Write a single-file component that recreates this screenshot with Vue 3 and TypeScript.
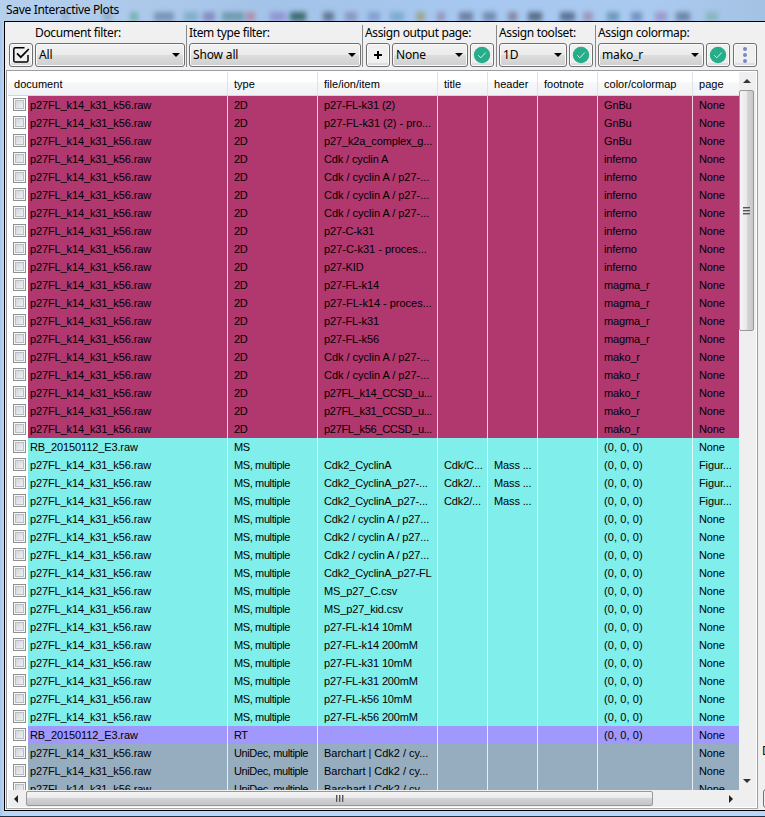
<script setup lang="ts">
interface Row {
  doc: string
  type: string
  item: string
  title: string
  header: string
  color: string
  page: string
  tone: string
}

const P27 = 'p27FL_k14_k31_k56.raw'
const RB = 'RB_20150112_E3.raw'

const make = (
  tone: string,
  type: string,
  item: string,
  color: string,
  doc = P27,
  title = '',
  header = '',
  page = 'None',
): Row => ({ doc, type, item, title, header, color, page, tone })

const plots2d: [string, string][] = [
  ['p27-FL-k31 (2)', 'GnBu'],
  ['p27-FL-k31 (2) - pro...', 'GnBu'],
  ['p27_k2a_complex_g...', 'GnBu'],
  ['Cdk / cyclin A', 'inferno'],
  ['Cdk / cyclin A / p27-...', 'inferno'],
  ['Cdk / cyclin A / p27-...', 'inferno'],
  ['Cdk / cyclin A / p27-...', 'inferno'],
  ['p27-C-k31', 'inferno'],
  ['p27-C-k31 - proces...', 'inferno'],
  ['p27-KID', 'inferno'],
  ['p27-FL-k14', 'magma_r'],
  ['p27-FL-k14 - proces...', 'magma_r'],
  ['p27-FL-k31', 'magma_r'],
  ['p27-FL-k56', 'magma_r'],
  ['Cdk / cyclin A / p27-...', 'mako_r'],
  ['Cdk / cyclin A / p27-...', 'mako_r'],
  ['p27FL_k14_CCSD_u...', 'mako_r'],
  ['p27FL_k31_CCSD_u...', 'mako_r'],
  ['p27FL_k56_CCSD_u...', 'mako_r'],
]

const spectra = [
  'Cdk2 / cyclin A / p27...',
  'Cdk2 / cyclin A / p27...',
  'Cdk2 / cyclin A / p27...',
  'Cdk2_CyclinA_p27-FL',
  'MS_p27_C.csv',
  'MS_p27_kid.csv',
  'p27-FL-k14 10mM',
  'p27-FL-k14 200mM',
  'p27-FL-k31 10mM',
  'p27-FL-k31 200mM',
  'p27-FL-k56 10mM',
  'p27-FL-k56 200mM',
]

const BLACK = '(0, 0, 0)'
const multi = 'MS, multiple'

const rows: Row[] = [
  ...plots2d.map(([item, color]) => make('magenta', '2D', item, color)),
  make('cyan', 'MS', '', BLACK, RB),
  make('cyan', multi, 'Cdk2_CyclinA', BLACK, P27, 'Cdk/C...', 'Mass ...', 'Figur...'),
  make('cyan', multi, 'Cdk2_CyclinA_p27-...', BLACK, P27, 'Cdk2/...', 'Mass ...', 'Figur...'),
  make('cyan', multi, 'Cdk2_CyclinA_p27-...', BLACK, P27, 'Cdk2/...', 'Mass ...', 'Figur...'),
  ...spectra.map((item) => make('cyan', multi, item, BLACK)),
  make('violet', 'RT', '', BLACK, RB),
  make('slate', 'UniDec, multiple', 'Barchart | Cdk2 / cy...', ''),
  make('slate', 'UniDec, multiple', 'Barchart | Cdk2 / cy...', ''),
  make('slate', 'UniDec, multiple', 'Barchart | Cdk2 / cy...', ''),
]

const track = (text: string): string => {
  if (text.includes('CCSD')) return 'tight'
  if (text === BLACK) return 'wide'
  if (text.includes(' - ') || /^Cdk \/.*\.\.\.$/.test(text) || text.startsWith('Barchart')) return 'loose'
  return ''
}

const columns = ['document', 'type', 'file/ion/item', 'title', 'header', 'footnote', 'color/colormap', 'page']

const blurs = [
  [62, 7, '#8da6c6'], [103, 9, '#88a4b8'], [130, 8, '#5fa99a'], [154, 20, '#6b83a8'], [184, 14, '#76a6bd'],
  [203, 12, '#7a78b4'], [222, 22, '#5f8f9e'], [246, 9, '#b37c92'], [270, 16, '#8c86ce'],
  [290, 16, '#1d4f4a'], [323, 11, '#4e5c78'], [345, 12, '#7f88b0'], [368, 12, '#7a92c8'], [390, 14, '#6fa4c4'],
  [416, 9, '#9a9a70'], [437, 8, '#8f86a4'], [459, 14, '#5c6888'], [483, 13, '#66749a'], [508, 9, '#7b7088'],
  [528, 14, '#3d5068'], [560, 15, '#405878'], [583, 10, '#9884a8'], [607, 12, '#5888a8'], [631, 11, '#6080b0'],
  [655, 12, '#9888c0'], [676, 14, '#587090'], [706, 12, '#80b0b0'],
] as [number, number, string][]
</script>

<template>
  <div class="window">
    <div class="titlebar">
      <svg class="behind" width="765" height="21" viewBox="0 0 765 21" aria-hidden="true">
        <rect v-for="b in blurs" :key="b[0]" :x="b[0]" y="12" :width="b[1]" height="9" :fill="b[2]" />
      </svg>
      <span class="caption">Save Interactive Plots</span>
    </div>

    <div class="client">
      <div class="main">
        <div class="toolbar">
          <div class="group g-doc">
            <label>Document filter:</label>
            <div class="controls">
              <button class="btn">
                <svg width="18" height="18" viewBox="0 0 18 18">
                  <path d="M12.5 1.8H3.4Q1.8 1.8 1.8 3.4v11q0 1.6 1.6 1.6h11q1.6 0 1.6-1.6V9" fill="none" stroke="#000" stroke-width="1.5" />
                  <path d="M5 7.4l3.8 3.8 8-8.2" fill="none" stroke="#000" stroke-width="1.7" />
                </svg>
              </button>
              <div class="select w150"><span>All</span><i /></div>
            </div>
          </div>
          <div class="group g-type">
            <label>Item type filter:</label>
            <div class="controls"><div class="select w172"><span>Show all</span><i /></div></div>
          </div>
          <div class="group g-page">
            <label>Assign output page:</label>
            <div class="controls">
              <button class="btn">
                <svg width="10" height="10" viewBox="0 0 10 10"><path d="M5 1v8M1 5h8" stroke="#000" stroke-width="2" /></svg>
              </button>
              <div class="select w76"><span>None</span><i /></div>
              <button class="btn">
                <svg width="18" height="18" viewBox="0 0 18 18"><circle cx="9" cy="9" r="8.2" fill="#27ad89" /><path d="M5.3 9.3l2.5 2.5 5-5.3" fill="none" stroke="#d9f3ea" stroke-width="1" /></svg>
              </button>
            </div>
          </div>
          <div class="group g-tool">
            <label>Assign toolset:</label>
            <div class="controls">
              <div class="select w68"><span>1D</span><i /></div>
              <button class="btn">
                <svg width="18" height="18" viewBox="0 0 18 18"><circle cx="9" cy="9" r="8.2" fill="#27ad89" /><path d="M5.3 9.3l2.5 2.5 5-5.3" fill="none" stroke="#d9f3ea" stroke-width="1" /></svg>
              </button>
            </div>
          </div>
          <div class="group g-map">
            <label>Assign colormap:</label>
            <div class="controls">
              <div class="select w106"><span>mako_r</span><i /></div>
              <button class="btn">
                <svg width="18" height="18" viewBox="0 0 18 18"><circle cx="9" cy="9" r="8.2" fill="#27ad89" /><path d="M5.3 9.3l2.5 2.5 5-5.3" fill="none" stroke="#d9f3ea" stroke-width="1" /></svg>
              </button>
              <button class="btn dots">
                <svg width="6" height="18" viewBox="0 0 6 18" fill="#7688c8"><circle cx="3" cy="3" r="2" /><circle cx="3" cy="9" r="2" /><circle cx="3" cy="15" r="2" /></svg>
              </button>
            </div>
          </div>
        </div>

        <div class="list">
          <div class="view">
            <div class="table">
              <div class="line head">
                <div v-for="c in columns" :key="c" class="cell">{{ c }}</div>
              </div>
              <div class="rows">
                <div v-for="(r, i) in rows" :key="i" class="line row" :class="r.tone">
                  <div class="cell doc"><span class="check" /><span class="name">{{ r.doc }}</span></div>
                  <div class="cell type">{{ r.type }}</div>
                  <div class="cell" :class="track(r.item)">{{ r.item }}</div>
                  <div class="cell">{{ r.title }}</div>
                  <div class="cell">{{ r.header }}</div>
                  <div class="cell"></div>
                  <div class="cell" :class="track(r.color)">{{ r.color }}</div>
                  <div class="cell">{{ r.page }}</div>
                </div>
              </div>
            </div>
            <div class="vscroll">
              <svg class="arrow" width="8" height="4" viewBox="0 0 8 4"><path d="M0 4L4 0l4 4z" fill="#333" /></svg>
              <div class="thumb"><b /><b /><b /></div>
              <svg class="arrow low" width="8" height="4" viewBox="0 0 8 4"><path d="M0 0l4 4 4-4z" fill="#333" /></svg>
            </div>
          </div>
          <div class="hscroll">
            <svg class="harrow" width="4" height="8" viewBox="0 0 4 8"><path d="M4 0v8L0 4z" fill="#222" /></svg>
            <div class="hthumb"><b /><b /><b /></div>
            <svg class="harrow right" width="4" height="8" viewBox="0 0 4 8"><path d="M0 0v8l4-4z" fill="#222" /></svg>
          </div>
        </div>
      </div>
      <div class="side">
        <span class="cut">D</span>
        <div class="field" />
      </div>
    </div>
    <div class="edge" />
  </div>
</template>

<style>
body {
  overflow: hidden;
}
</style>

<style scoped>
* {
  box-sizing: border-box;
}
.window {
  width: 765px;
  height: 817px;
  display: flex;
  flex-direction: column;
  background: linear-gradient(90deg, #a9c6e8, #b9d6f8 4px, #b9d6f8);
  overflow: hidden;
  font-family: "Noto Sans", "Open Sans", sans-serif;
  color: #000;
}
.titlebar {
  position: relative;
  height: 21px;
  flex: none;
  background: linear-gradient(90deg, #b6d0ec, #a4c3e8 35%, #a6c7ef 60%, #abcaf0 85%, #a4c2e3);
}
.behind {
  position: absolute;
  left: 0;
  top: 0;
  filter: blur(2.5px);
  opacity: 0.75;
}
.caption {
  position: relative;
  display: block;
  padding-left: 6px;
  font: 12px/19px "Noto Sans", sans-serif;
  letter-spacing: -0.33px;
}
.client {
  position: relative;
  margin-left: 4px;
  height: 790px;
  display: flex;
  border: 1px solid #000;
  border-right: 0;
  background: #f0f0f0;
}
.main {
  width: 752px;
  padding-left: 1px;
  flex: none;
}
.toolbar {
  height: 48px;
  display: flex;
  padding: 3px 0 0 3px;
}
.group {
  height: 42px;
  flex: none;
}
.group + .group {
  border-left: 1px solid #888;
  padding-left: 2px;
}
.g-doc {
  width: 177px;
}
.g-type {
  width: 176px;
}
.g-page {
  width: 134px;
}
.g-page .controls {
  margin-left: 1px;
}
.g-tool {
  width: 99px;
}
.group label {
  display: block;
  height: 18px;
  font-size: 12px;
  line-height: 16px;
  letter-spacing: -0.36px;
  white-space: nowrap;
}
.g-doc label {
  padding-left: 26px;
}
.controls {
  display: flex;
  gap: 2px;
}
.btn,
.select {
  height: 24px;
  border: 1px solid #707070;
  border-radius: 3px;
  background: linear-gradient(#f2f2f2, #ebebeb 50%, #dddddd 50%, #cfcfcf);
  box-shadow: inset 0 0 0 1px #fafafa;
}
.btn {
  width: 24px;
  flex: none;
  padding: 0;
  display: flex;
  align-items: center;
  justify-content: center;
  background: #f0f0f0;
  box-shadow: inset 0 0 0 1px #fcfcfc, inset 0 -2px 1px 1px #ddd;
}
.dots {
  margin-left: 1px;
}
.select {
  flex: none;
  display: flex;
  align-items: center;
  justify-content: space-between;
  padding: 0 4px 1px 3px;
  font-size: 12px;
  letter-spacing: -0.15px;
}
.select i {
  border: 4px solid transparent;
  border-top-color: #000;
  border-bottom: 0;
}
.w150 { width: 150px; }
.w172 { width: 172px; }
.w76 { width: 76px; }
.w68 { width: 68px; }
.w106 { width: 106px; }
.list {
  width: 752px;
  height: 739px;
  border: 1px solid #9c9ca4;
  border-bottom-color: #aaa;
  background: #fff;
  padding: 1px;
}
.view {
  height: 718px;
  display: flex;
}
.table {
  width: 731px;
  flex: none;
  display: flex;
  flex-direction: column;
  overflow: hidden;
  font-family: "Liberation Sans", Arial, sans-serif;
  font-size: 11px;
}
.line {
  display: grid;
  grid-template-columns: 220px 90px 120px 50px 50px 60px 95px 46px;
  flex: none;
}
.head {
  height: 24px;
  background: linear-gradient(#fff 0, #fff 45%, #f5f7f9 46%, #f0f2f5);
  border-bottom: 1px solid #d5d5d5;
}
.head .cell {
  line-height: 25px;
  border-color: #dfe3e8;
  letter-spacing: 0.02px;
}
.cell {
  border-right: 1px solid rgba(255, 255, 255, 0.78);
  padding-left: 6px;
  white-space: nowrap;
  overflow: hidden;
  letter-spacing: -0.13px;
}
.cell:last-child {
  border-right: 0;
}
.tight {
  letter-spacing: -0.3px;
}
.loose {
  letter-spacing: -0.02px;
}
.wide {
  letter-spacing: 0.1px;
}
.rows {
  flex: 1;
  overflow: hidden;
}
.row {
  height: 18px;
  line-height: 19px;
}
.row .cell {
  background: var(--tone);
  background-clip: padding-box;
}
.row .doc {
  background: linear-gradient(90deg, #fff 20px, var(--tone) 20px) padding-box;
  display: flex;
  align-items: center;
  gap: 4px;
  padding-left: 5px;
  letter-spacing: -0.12px;
}
.row .type {
  letter-spacing: -0.38px;
}
.row {
  background: var(--tone);
}
.magenta { --tone: #b1376f; }
.cyan { --tone: #80eeeb; }
.violet { --tone: #a198fd; }
.slate { --tone: #96adc0; }
.check {
  width: 13px;
  height: 13px;
  flex: none;
  margin-top: -1px;
  border: 1px solid #8e8f8f;
  box-shadow: inset 0 0 0 1px #f6f6f6, inset 0 0 0 2px #b8bec6;
  background: linear-gradient(135deg, #ccd0d6, #f6f6f6);
}
.vscroll {
  width: 17px;
  flex: none;
  background: #efefef;
  display: flex;
  flex-direction: column;
  align-items: center;
  padding-right: 2px;
}
.arrow {
  margin: 7px 0;
  flex: none;
}
.low {
  margin: auto 0 7px;
}
.thumb {
  width: 15px;
  height: 241px;
  border: 1px solid #989898;
  border-radius: 2px;
  background: linear-gradient(90deg, #f5f5f5, #e9e9eb 50%, #d7d7d9 50%, #c8c8ca);
  display: flex;
  flex-direction: column;
  align-items: center;
  justify-content: center;
  gap: 1px;
}
.thumb b {
  width: 7px;
  height: 2px;
  background: #555;
  border-bottom: 1px solid #aaa;
}
.hscroll {
  height: 17px;
  width: 748px;
  background: #efefef;
  display: flex;
  align-items: center;
}
.harrow {
  margin: 0 8px 0 6px;
  flex: none;
}
.right {
  margin-left: 76px;
}
.hthumb {
  width: 627px;
  height: 15px;
  border: 1px solid #989898;
  border-radius: 2px;
  background: linear-gradient(#f5f5f5, #e9e9eb 50%, #d4d4d6 50%, #c4c4c6);
  display: flex;
  align-items: center;
  justify-content: center;
  gap: 1px;
}
.hthumb b {
  width: 2px;
  height: 7px;
  background: #555;
  border-right: 1px solid #aaa;
}
.side {
  flex: 1;
  overflow: hidden;
  display: flex;
  flex-direction: column;
  align-items: flex-start;
  padding: 720px 0 0 5px;
}
.cut {
  font-size: 12px;
  line-height: 17px;
}
.field {
  margin-top: 30px;
  margin-left: 1px;
  width: 24px;
  height: 19px;
  border: 1px solid #707070;
  border-radius: 3px;
  flex: none;
}
.edge {
  height: 6px;
  border-bottom: 1px solid #203040;
}
</style>
